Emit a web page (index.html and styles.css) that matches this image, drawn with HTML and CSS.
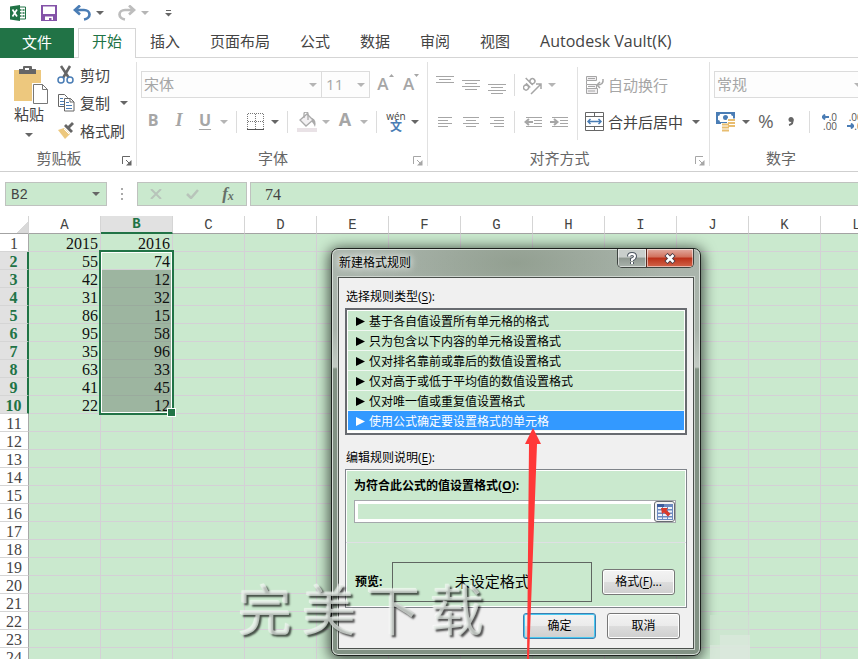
FILE: index.html
```html
<!DOCTYPE html>
<html lang="zh-CN">
<head>
<meta charset="utf-8">
<title>Excel</title>
<link rel="stylesheet" href="styles.css">
</head>
<body>
<svg class="defs" aria-hidden="true">
  <symbol id="launcher" viewBox="0 0 10 10"><path d="M.5 8V.5H8M4 4l3 3" fill="none" stroke="currentColor"/><path d="M9.500 4v5.500H4z" fill="currentColor"/></symbol>
</svg>

<header class="quick">
  <svg class="logo" width="16" height="16" viewBox="0 0 16 16"><path d="M9 2h6.500v12H9" fill="#fff" stroke="#217346"/><path d="M10 5h1.500m1 0h2M10 8h1.500m1 0h2M10 11h1.500m1 0h2" stroke="#217346" stroke-width="1.500"/><path d="M0 1.500 10 0v16L0 14.500z" fill="#217346"/><path d="m2.500 4.500 4.500 7m0-7-4.500 7" stroke="#fff" stroke-width="1.700"/></svg>
  <button class="plain save" aria-label="保存"><svg width="16" height="16" viewBox="0 0 16 16"><path d="M0 0h16v16H0z" fill="#8453a8"/><path d="M2 1.500h12V9H2zM4 11.500h8V15h-1.500v-2H8v2H4z" fill="#fff"/></svg></button>
  <button class="plain" aria-label="撤消"><svg width="18" height="16" viewBox="0 0 18 16"><path d="M2 5h9c3 0 5.500 2 5.500 4.500S14 14 11 14.500" fill="none" stroke="#4a7db5" stroke-width="2.700"/><path d="M7 .5 2 5l5 4.500" fill="none" stroke="#4a7db5" stroke-width="2.700"/></svg></button>
  <button class="plain caret" aria-label="撤消列表"></button>
  <button class="plain off redo" aria-label="恢复"><svg width="18" height="16" viewBox="0 0 18 16"><path d="M16 5H7C4 5 1.500 7 1.500 9.500S4 14 7 14.500M11 .5 16 5l-5 4.500" fill="none" stroke="#bdbdbd" stroke-width="2.700"/></svg></button>
  <button class="plain caret off" aria-label="恢复列表"></button>
  <button class="plain customize" aria-label="自定义"><svg width="7" height="7" viewBox="0 0 7 7"><path d="M1 .5h5" stroke="#666"/><path d="M0 3h7L3.500 6.500z" fill="#666"/></svg></button>
</header>

<nav class="tabs">
  <a class="file" href="#">文件</a>
  <a class="active" href="#">开始</a>
  <a href="#">插入</a>
  <a href="#">页面布局</a>
  <a href="#">公式</a>
  <a href="#">数据</a>
  <a href="#">审阅</a>
  <a href="#">视图</a>
  <a class="latin" href="#">Autodesk Vault(K)</a>
</nav>

<section class="ribbon">
  <div class="group clipboard">
    <div class="body">
      <button class="plain paste"><svg width="36" height="40" viewBox="0 0 36 40"><path d="M0 4h27v31H0z" fill="#edc87e"/><path d="M5 8V3h4V1q0-1 1-1h7q1 0 1 1v2h4v5z" fill="#666"/><path d="M11 2h4v2h-4z" fill="#fff"/><path d="M18 17h11l6 6v15H18z" fill="#fff"/><path d="M19.500 18.500h9l5 5v14h-14zM28.500 18.500v5h5" fill="#fff" stroke="#777"/></svg><span>粘贴</span><i class="caret"></i></button>
      <div class="stack">
        <button class="plain"><svg width="18" height="20" viewBox="0 0 18 20"><path d="m4 1 8 12M13 1 6 13" stroke="#666" stroke-width="2.500"/><circle cx="4" cy="15" r="3" fill="#fff" stroke="#4a7db5" stroke-width="1.500"/><circle cx="13" cy="15" r="3" fill="#fff" stroke="#4a7db5" stroke-width="1.500"/></svg>剪切</button>
        <button class="plain"><svg width="18" height="20" viewBox="0 0 18 20"><path d="M1.500 1.500h6l3 3v9h-9z" fill="#fff" stroke="#666"/><path d="M3 5.500h3m-3 3h4m-4 3h4" stroke="#4a7db5"/><path d="M7.500 5.500h6l3.500 3.500v9H7.500z" fill="#fff" stroke="#666"/><path d="M13 5.500V9h4" fill="none" stroke="#666"/><path d="M9 9.500h3m-3 3h6m-6 3h6" stroke="#4a7db5"/></svg>复制<i class="caret"></i></button>
        <button class="plain"><svg width="18" height="20" viewBox="0 0 18 20"><path d="m1 9 6-2 6 6-5 5z" fill="#edc87e"/><path d="m7 5 7 7 2-2-3-3 4-4-2-2-4 4-2-2z" fill="#666"/><path d="m7 8 5 5" stroke="#fff"/></svg>格式刷</button>
      </div>
    </div>
    <footer><span>剪贴板</span><button class="plain" aria-label="剪贴板选项"><svg width="10" height="10"><use href="#launcher"/></svg></button></footer>
  </div>

  <div class="group font">
    <div class="body rows">
      <div class="line">
        <div class="combo face"><select aria-label="字体"><option>宋体</option></select></div>
        <div class="combo size"><select aria-label="字号"><option>11</option></select></div>
        <button class="tool off letter" aria-label="增大字号">A<svg width="5" height="3"><path d="M0 3 2.500 0 5 3z" fill="currentColor"/></svg></button>
        <button class="tool off letter" aria-label="减小字号">A<svg width="5" height="3"><path d="M0 0h5L2.500 3z" fill="currentColor"/></svg></button>
      </div>
      <div class="line">
        <button class="tool off bold">B</button>
        <button class="tool off italic">I</button>
        <button class="tool off under">U</button><button class="plain caret off" aria-label="下划线选项"></button>
        <hr>
        <button class="tool" aria-label="边框"><svg width="18" height="18" viewBox="0 0 18 18"><path d="M.5 1v15M8.500 1v15M16.500 1v15M1 .5h16M1 8.500h16" stroke="#777" stroke-dasharray="1 1"/><path d="M0 16.500h17" stroke="#555"/></svg></button><button class="plain caret" aria-label="边框选项"></button>
        <hr>
        <button class="tool off" aria-label="填充颜色"><svg width="20" height="20" viewBox="0 0 20 20"><path d="m3 8 7-6 6 6-7 6z" fill="#f2f0f2" stroke="#aaa" stroke-width="1.300"/><path d="M7 6V2q0-2 2-2t2 2v6" fill="none" stroke="#aaa" stroke-width="1.300"/><path d="M15 6q5 2 3 9-1-3-3-5z" fill="#aaa"/><path d="M0 16h20v4H0z" fill="#e9e2e6"/></svg></button><button class="plain caret off" aria-label="填充选项"></button>
        <button class="tool off fontcolor" aria-label="字体颜色">A</button><button class="plain caret off" aria-label="字体颜色选项"></button>
        <hr>
        <button class="tool phonetic"><small>wén</small><b>文</b></button><button class="plain caret" aria-label="拼音选项"></button>
      </div>
    </div>
    <footer><span>字体</span><button class="plain off" aria-label="字体选项"><svg width="10" height="10"><use href="#launcher"/></svg></button></footer>
  </div>

  <div class="group align">
    <div class="body">
      <div class="rows">
        <div class="line">
          <button class="tool off" aria-label="顶端对齐"><svg width="18" height="20"><path d="M0 1.500h18M3 4.500h12M0 7.500h18" stroke="currentColor"/></svg></button>
          <button class="tool off" aria-label="垂直居中"><svg width="18" height="20"><path d="M0 5.500h18M3 8.500h12M0 11.500h18M3 14.500h12" stroke="currentColor"/></svg></button>
          <button class="tool off" aria-label="底端对齐"><svg width="18" height="20"><path d="M0 9.500h18M3 12.500h12M0 15.500h18M3 18.500h12" stroke="currentColor"/></svg></button>
          <hr>
          <button class="tool off" aria-label="方向"><svg width="20" height="20" viewBox="0 0 20 20"><g transform="rotate(-45 8 9)" fill="none" stroke="currentColor" stroke-width="1.500"><circle cx="2" cy="8" r="2.500"/><path d="M5 5v6M8.500 1v10"/><circle cx="11" cy="8" r="2.500"/></g><path d="m8 19 10-10m-5 0h5v5" fill="none" stroke="currentColor" stroke-width="1.500"/></svg></button><button class="plain caret off" aria-label="方向选项"></button>
        </div>
        <div class="line">
          <button class="tool off" aria-label="左对齐"><svg width="14" height="12"><path d="M0 1.500h14M0 4.500h10M0 7.500h14M0 10.500h10" stroke="currentColor"/></svg></button>
          <button class="tool off" aria-label="居中"><svg width="16" height="12"><path d="M0 1.500h16M3 4.500h10M0 7.500h16M3 10.500h10" stroke="currentColor"/></svg></button>
          <button class="tool off" aria-label="右对齐"><svg width="14" height="12"><path d="M0 1.500h14M4 4.500h10M0 7.500h14M4 10.500h10" stroke="currentColor"/></svg></button>
          <hr>
          <button class="tool off" aria-label="减少缩进"><svg width="18" height="12"><path d="M2 1.500h16M10 4.500h8M10 7.500h8M2 10.500h16" stroke="currentColor"/><path d="M1 6h8M5 3 1.500 6 5 9" fill="none" stroke="currentColor" stroke-width="2"/></svg></button>
          <button class="tool off" aria-label="增加缩进"><svg width="18" height="12"><path d="M2 1.500h16M10 4.500h8M10 7.500h8M2 10.500h16" stroke="currentColor"/><path d="M0 6h8M4 3l3.500 3L4 9" fill="none" stroke="currentColor" stroke-width="2"/></svg></button>
        </div>
      </div>
      <div class="rows wide">
        <div class="line"><button class="plain off"><svg width="20" height="20" viewBox="0 0 20 20"><path d="M1.500 1.500h10v4h-10zM1.500 9.500h10v4M1.500 9.500v9h11v-5h-11M1.500 5.500v4" fill="#f0eef0" stroke="currentColor"/><path d="M3 3.500h7M3 11.500h7M3 16h7" stroke="currentColor"/><path d="M18 4q1 6-6 6m3-3-3 3 3 3" fill="none" stroke="currentColor" stroke-width="1.500"/></svg>自动换行</button></div>
        <div class="line"><button class="plain"><svg width="20" height="20" viewBox="0 0 20 20"><path d="M.5.5h18v18H.5zM.5 4.500h18M.5 14.500h18M9.500.5v4M9.500 14.500v4" fill="none" stroke="#666"/><path d="M3 9.500h13M5.500 7 3 9.500 5.500 12m8-5L16 9.500 13.500 12" fill="none" stroke="#4a7db5" stroke-width="1.500"/></svg>合并后居中<i class="caret"></i></button></div>
      </div>
    </div>
    <footer><span>对齐方式</span><button class="plain off" aria-label="对齐选项"><svg width="10" height="10"><use href="#launcher"/></svg></button></footer>
  </div>

  <div class="group number">
    <div class="body rows">
      <div class="line"><div class="combo format"><select aria-label="数字格式"><option>常规</option></select></div></div>
      <div class="line">
        <button class="tool" aria-label="会计数字格式"><svg width="20" height="20" viewBox="0 0 20 20"><path d="M0 0h19v12H0z" fill="#4a7db5"/><path d="M2 4q2 0 2-2h11q0 2 2 2v4q-2 0-2 2H4q0-2-2-2z" fill="#fff"/><circle cx="9.500" cy="5.500" r="2.500" fill="#4a7db5"/><path d="M11 6.500h9V16h-6v4H5v-9h6z" fill="#fff"/><path d="M12 8h7m-7 3h7m-7 3h7M6 12.500h7m-7 3h7m-7 3h7" stroke="#e8bd70" stroke-width="2"/></svg></button><button class="plain caret" aria-label="货币选项"></button>
        <button class="tool percent">%</button>
        <button class="tool" aria-label="千位分隔样式"><svg width="8" height="12" viewBox="0 0 8 12"><circle cx="4" cy="3.500" r="2.500" fill="#666"/><path d="M5.500 3q1 5-3.500 6" stroke="#666" stroke-width="2" fill="none"/></svg></button>
        <hr>
        <button class="tool decimal" aria-label="增加小数位数"><span><svg width="7" height="6"><path d="M0 3h7M3 .5.500 3 3 5.500" fill="none" stroke="#4a7db5" stroke-width="2"/></svg>.0</span><span>.00</span></button>
        <button class="tool decimal" aria-label="减少小数位数"><span>.00</span><span><svg width="7" height="6"><path d="M0 3h7M4 .5 6.500 3 4 5.500" fill="none" stroke="#4a7db5" stroke-width="2"/></svg>.0</span></button>
      </div>
    </div>
    <footer><span>数字</span></footer>
  </div>
</section>

<section class="formulabar">
  <div class="namebox"><input aria-label="名称框" value="B2"><i class="caret"></i></div>
  <svg class="grip" width="2" height="12"><path d="M0 1h2M0 6h2M0 11h2" stroke="#aaa" stroke-width="2"/></svg>
  <div class="entry">
    <button class="plain" aria-label="取消输入"><svg width="12" height="10" viewBox="0 0 12 10"><path d="m1 0 10 10M11 0 1 10" stroke="#b8c4ba" stroke-width="2"/></svg></button>
    <button class="plain" aria-label="输入"><svg width="13" height="10" viewBox="0 0 13 10"><path d="m1 5 4 4 7-8" fill="none" stroke="#b8c4ba" stroke-width="2.500"/></svg></button>
    <button class="plain fx" aria-label="插入函数">f<small>x</small></button>
  </div>
  <input class="formula" aria-label="编辑栏" value="74">
</section>

<main class="sheet">
  <table id="grid"></table>
  <div class="selection"></div>
</main>

<section class="dialog" role="dialog" aria-labelledby="dialog-title">
  <header>
    <h1 id="dialog-title">新建格式规则</h1>
    <div class="winbuttons">
      <button class="help" aria-label="帮助"><svg width="10" height="13" viewBox="0 0 10 13"><path d="M2 4.500Q2 2 5 2t3 2.500Q8 6 5 7.500V9M5 10v2" fill="none" stroke="#4c5560" stroke-width="4"/><path d="M2 4.500Q2 2 5 2t3 2.500Q8 6 5 7.500V9M5 10v2" fill="none" stroke="#fff" stroke-width="2"/></svg></button>
      <button class="close" aria-label="关闭"><svg width="12" height="11" viewBox="0 0 12 11"><path d="m2 1.500 8 8m0-8-8 8" stroke="#4b3a44" stroke-width="4.500"/><path d="m2.500 2 7 7m0-7-7 7" stroke="#fff" stroke-width="2.500"/></svg></button>
    </div>
  </header>
  <form class="content">
    <p class="caption" id="type-label">选择规则类型(<u>S</u>):</p>
    <div class="rules" role="radiogroup" aria-labelledby="type-label">
      <label><input type="radio" name="rule">基于各自值设置所有单元格的格式</label>
      <label><input type="radio" name="rule">只为包含以下内容的单元格设置格式</label>
      <label><input type="radio" name="rule">仅对排名靠前或靠后的数值设置格式</label>
      <label><input type="radio" name="rule">仅对高于或低于平均值的数值设置格式</label>
      <label><input type="radio" name="rule">仅对唯一值或重复值设置格式</label>
      <label><input type="radio" name="rule" checked>使用公式确定要设置格式的单元格</label>
    </div>
    <p class="caption">编辑规则说明(<u>E</u>):</p>
    <div class="editor">
      <div class="condition">
        <label for="rule-formula">为符合此公式的值设置格式(<u>O</u>):</label>
        <div class="picker">
          <input id="rule-formula">
          <button type="button" aria-label="选择区域"><svg width="16" height="16" viewBox="0 0 16 16"><path d="M0 0h16v16H0z" fill="#6d8bc0"/><path d="M0 0h7v3H0z" fill="#3d5c9c"/><path d="M1 3h4v2H1zm5 0h4v2H6zm5 0h4v2h-4zM1 6.500h4v2H1zm5 0h4v2H6zm5 0h4v2h-4zM1 10h4v2H1zm5 0h4v2H6zm5 0h4v2h-4zM1 13.500h4V15H1zm5 0h4V15H6zm5 0h4V15h-4z" fill="#edf2fa"/><path d="M4 4h7L9.500 6l4 4-2.500 2.500-4-4L5 10z" fill="#d93a2b"/></svg></button>
        </div>
      </div>
      <div class="preview">
        <span>预览:</span>
        <output>未设定格式</output>
        <button type="button" class="push">格式(<u>F</u>)...</button>
      </div>
    </div>
    <div class="actions">
      <button type="button" class="push default">确定</button>
      <button type="button" class="push">取消</button>
    </div>
  </form>
</section>

<svg class="haze" width="60" height="44" viewBox="0 0 60 44" aria-hidden="true"><path d="M0 0h40v44H0z" fill="#d0e3d2" opacity=".5"/><path d="M10 20h30v24H10z" fill="#dce8dd" opacity=".7"/><path d="M0 30h40v14H0z" fill="#dce8dd" opacity=".6"/></svg>
<div class="watermark"><span>完</span><span>美</span><span>下</span><span>载</span></div>
<svg class="arrow" width="18" height="232" viewBox="0 0 18 232" aria-hidden="true"><path d="M8 0 16 16h-4L4 232H2L4 16H0z" fill="#ff3838"/></svg>
<script src="grid.js"></script>
</body>
</html>
```
FILE: styles.css
```css
:root {
  --green: #217346;
  --cell: #cae9ce;
  --line: #d4d0d6;
  --rule: #d5d5d5;
  --text: #444;
  --off: #a6a6a6;
}

* { box-sizing: border-box; }

body {
  margin: 0;
  height: 100vh;
  overflow: hidden;
  display: flex;
  flex-direction: column;
  background: #fff;
  color: var(--text);
  font: 15px/20px "Open Sans", "Noto Sans CJK SC", sans-serif;
}

button, input, select { font: inherit; color: inherit; }
svg { display: block; flex: none; }
.defs { position: absolute; width: 0; height: 0; }

.plain, .tool {
  display: flex;
  align-items: center;
  justify-content: center;
  padding: 0;
  border: 0;
  background: none;
  white-space: nowrap;
}
.tool { width: 26px; height: 26px; }
.off { color: var(--off); }

.caret {
  display: flex;
  align-items: center;
  justify-content: center;
  flex: none;
  width: 12px;
  color: #666;
}
.caret::before {
  content: "";
  border: 4px solid transparent;
  border-top-color: currentColor;
  border-bottom: 0;
}
.caret.off { color: #b5b5b5; }

/* Quick access toolbar */
.quick {
  display: flex;
  align-items: center;
  flex: none;
  height: 28px;
  padding: 0 10px 2px;
}
.save { margin: 0 16px 0 15px; }
.quick > .caret { margin-left: 3px; }
.redo { margin-left: 12px; }
.customize { margin-left: 14px; }

/* Ribbon tabs */
.tabs {
  display: flex;
  flex: none;
  height: 30px;
  border-bottom: 1px solid var(--rule);
}
.tabs a {
  padding: 3px 15px;
  color: var(--text);
  text-decoration: none;
  white-space: nowrap;
}
.tabs .latin { font-size: 16px; }
.tabs .file {
  width: 74px;
  height: 30px;
  margin-right: 4px;
  padding-top: 4px;
  background: var(--green);
  color: #fff;
  text-align: center;
}
.tabs .active {
  height: 30px;
  padding: 2px 13px;
  border: 1px solid var(--rule);
  border-bottom: 0;
  background: #fff;
  color: var(--green);
}
.tabs .active + a { padding-left: 14px; }

/* Ribbon */
.ribbon {
  display: flex;
  flex: none;
  height: 114px;
  padding: 4px 0 5px;
  border-bottom: 1px solid #cfcfcf;
}
.group {
  display: flex;
  flex-direction: column;
  flex: none;
  border-right: 1px solid #e1e1e1;
}
.group .body { display: flex; flex: 1; }
.group footer {
  display: flex;
  align-items: flex-end;
  height: 18px;
  padding-right: 4px;
  color: #666;
}
.group footer span { flex: 1; height: 18px; padding-right: 4px; text-align: center; }
.clipboard { width: 137px; }
.font { width: 291px; }
.align { width: 282px; }
.number { width: 160px; border: 0; }
.number footer { padding-right: 14px; }

.group .rows { display: flex; flex-direction: column; gap: 10px; padding: 9px 3px 0; }
.line { display: flex; align-items: center; height: 27px; }
.line hr { width: 1px; height: 22px; margin: 0 6px; border: 0; background: #dcdcdc; }

.paste { flex-direction: column; justify-content: flex-start; width: 56px; padding: 4px 0 0 8px; }
.paste span { line-height: 20px; margin: -2px 6px 9px 0; }
.paste .caret { margin-right: 6px; }
.stack { display: flex; flex-direction: column; padding-left: 1px; }
.stack button { justify-content: flex-start; gap: 5px; height: 28px; padding-bottom: 2px; }
.stack .caret { margin-left: 3px; }

.combo { position: relative; height: 27px; border: 1px solid #dcdcdc; background: #fdfdfd; }
.combo select {
  display: block;
  width: 100%;
  height: 25px;
  padding: 0 2px 2px;
  border: 0;
  appearance: none;
  background: none;
  color: var(--off);
}
.combo::after {
  content: "";
  position: absolute;
  top: 11px;
  right: 4px;
  border: 4px solid transparent;
  border-top-color: #b5b5b5;
  border-bottom: 0;
}
.font .line:first-child { margin-left: 1px; }
.face { width: 183px; }
.size { width: 48px; border-left: 0; }
.size select { padding-left: 4px; }
.format { flex: 1; }

.letter { align-items: flex-start; padding: 2px 0 0; font-size: 17px; font-weight: 600; }
.size + .letter { margin-left: 3px; }
.bold, .under { padding-bottom: 3px; font-size: 16px; font-weight: 700; }
.italic { padding-bottom: 2px; font: italic bold 18px "Liberation Serif", serif; }
.under { text-decoration: underline; text-underline-offset: 3px; }
.fontcolor { font-size: 18px; font-weight: 700; padding-bottom: 5px; }
.phonetic { flex-direction: column; }
.phonetic small { font-size: 10px; line-height: 8px; }
.phonetic b { font: 700 12px/12px "Noto Sans CJK SC", sans-serif; color: #4a7db5; }

.align .body > .rows { padding-left: 4px; }
.align hr { margin: 0 5px 0 4px; }
.align .body > .wide { margin: 5px 0 8px 2px; padding: 4px 0 0 7px; border-left: 1px solid #e1e1e1; }
.wide button { gap: 3px; }
.wide .caret { margin-left: 4px; }

.number .line { padding-left: 1px; }
.percent { margin-left: 1px; padding-bottom: 2px; font-size: 19px; color: #666; }
.number .caret { width: 14px; }
.decimal { flex-direction: column; margin-right: 1px; font-size: 10px; line-height: 9px; color: #555; }
.decimal span { display: flex; align-items: center; justify-content: flex-end; width: 18px; }

/* Formula bar */
.formulabar {
  display: flex;
  align-items: center;
  flex: none;
  height: 44px;
  padding-left: 5px;
}
.namebox, .entry, .formula {
  display: flex;
  height: 24px;
  border: 1px solid #bfc2bf;
  background: var(--cell);
}
.namebox { width: 102px; padding-right: 4px; }
.namebox input {
  flex: 1;
  min-width: 0;
  padding: 2px 5px 0;
  border: 0;
  background: none;
  font: 14px "Liberation Mono", monospace;
}
.grip { margin: 0 14px; }
.entry { width: 110px; }
.entry button { flex: 1; }
.fx { font: italic bold 17px "Liberation Serif", serif; color: #667068; }
.fx small { font-size: 12px; padding-top: 4px; }
.formula {
  flex: 1;
  min-width: 0;
  margin-left: 3px;
  padding: 2px 14px 0;
  border-right: 0;
  font: 16px "Liberation Serif", serif;
}

/* Worksheet */
.sheet { position: relative; flex: 1; min-height: 0; overflow: hidden; }
#grid {
  width: 893px;
  table-layout: fixed;
  border-collapse: separate;
  border-spacing: 0;
  font: 16px/15px "Liberation Serif", serif;
  color: #111;
}
#grid th, #grid td { height: 18px; padding: 2px 0 0; }
#grid th { background: #fff; color: var(--text); font-weight: 400; text-align: center; }
#grid th:first-child { width: 29px; border-right: 1px solid #a8a8a8; border-bottom: 1px solid var(--rule); }
#grid thead th {
  padding-top: 1px;
  border-right: 1px solid var(--rule);
  border-bottom: 1px solid #a3a3a3;
  font-family: "Liberation Mono", monospace;
  font-size: 14px;
}
#grid thead th:first-child {
  border-color: var(--rule) var(--rule) #a3a3a3;
  background: linear-gradient(135deg, #fff 75%, #d9d9d9 75%);
}
#grid td {
  padding-right: 2px;
  border-right: 1px solid var(--line);
  border-bottom: 1px solid var(--line);
  background: var(--cell);
  text-align: right;
}
#grid th.on { background: #e1e1e1; color: var(--green); font-weight: 700; }
#grid thead th.on { border-bottom: 2px solid var(--green); }
#grid tbody th.on { border-right: 2px solid var(--green); }
#grid td.shade { background: #9db5a0; border-bottom-color: #9aaa9d; }

/* Marquee round B2:B10 */
.selection {
  position: absolute;
  left: 99px;
  top: 34px;
  width: 75px;
  height: 165px;
  border: 2px solid var(--green);
  box-shadow: inset 0 0 0 1px #fff;
}
.selection::after {
  content: "";
  position: absolute;
  right: -4px;
  bottom: -4px;
  width: 7px;
  height: 7px;
  border: 1px solid #fff;
  background: var(--green);
}

/* Dialog window */
.dialog {
  position: absolute;
  left: 331px;
  top: 248px;
  width: 370px;
  padding: 0 6px 6px;
  border: 1px solid #1c211d;
  border-radius: 7px;
  background:
    radial-gradient(ellipse 150px 60px at 50% 14px, #83917f99, transparent),
    linear-gradient(#aab5ac, #a9b4ab 80px, #c2cac3 118px, #829284 120px, #829284);
  box-shadow: inset 0 0 0 1px #d8dfd9, 0 2px 14px 2px #000a;
  color: #000;
  font: 12px/16px "Open Sans", "Noto Sans CJK SC", sans-serif;
}
.dialog header { display: flex; justify-content: space-between; height: 28px; }
.dialog h1 {
  margin: 6px 0 0 1px;
  font-size: 12px;
  font-weight: 400;
  line-height: 16px;
  text-shadow: 0 0 6px #fff, 0 0 10px #fff;
}
.winbuttons {
  display: flex;
  height: 19px;
  border: 1px solid #3e4440;
  border-top: 0;
  border-radius: 0 0 5px 5px;
  overflow: hidden;
}
.winbuttons button { display: grid; place-items: center; padding: 0; border: 0; box-shadow: inset 0 0 0 1px #fff8; }
.help { width: 28px; background: linear-gradient(#c9cecb 45%, #8f9891 50%, #a9b2ab); }
.winbuttons .close { width: 47px; border-left: 1px solid #5a2a20; background: linear-gradient(#e2aca0, #d1705b 45%, #bb3018 50%, #d2654a); }

.content {
  padding: 11px 6px 9px;
  border: 1px solid #4b504c;
  background: #f0f0f0;
  box-shadow: 0 0 0 1px #cdd4ce;
}
.caption { margin: 0 0 3px 1px; }
.dialog u { text-underline-offset: 2px; }
.rules {
  padding: 1px 1px 2px;
  border: 2px solid #686b70;
  background: #fff;
}
.rules label {
  display: flex;
  align-items: center;
  height: 20px;
  padding: 2px 0 0 8px;
  border-bottom: 1px solid #f1f8f2;
  background: var(--cell);
}
.rules input {
  appearance: none;
  width: 9px;
  height: 9px;
  margin: 0 4px 0 0;
  background: currentColor;
  clip-path: polygon(0 0, 100% 50%, 0 100%);
}
.rules label:has(:checked) { background: #39f; color: #fff; }
.rules + .caption { margin-top: 15px; }

.editor {
  border: 1px solid #7f848a;
  background: var(--cell);
  box-shadow: inset 0 0 0 1px #fff;
}
.condition { padding: 8px 10px 19px 8px; border-bottom: 1px solid #dfe0e4; }
.condition label, .preview span { font-weight: 700; }
.picker {
  display: flex;
  height: 23px;
  margin-top: 6px;
  border: 1px solid #a5a8ac;
  background: #fff;
}
.picker input {
  flex: 1;
  min-width: 0;
  margin: 3px;
  padding: 0 2px;
  border: 0;
  background: var(--cell);
}
.picker button {
  display: grid;
  place-items: center;
  width: 21px;
  padding: 0;
  border: 1px solid #666a70;
  border-radius: 3px;
  background: #f3f3f3;
}
.preview { display: flex; align-items: center; padding: 19px 11px 5px 9px; }
.preview output {
  flex: 1;
  height: 40px;
  margin: 0 10px;
  border: 1px solid #5f6661;
  font-size: 15px;
  line-height: 36px;
  text-align: center;
}
.push {
  width: 73px;
  height: 26px;
  padding: 0;
  border: 1px solid #777;
  border-radius: 3px;
  background: linear-gradient(#f3f3f3, #ebebeb 49%, #dddddd 50%, #cfcfcf);
  box-shadow: inset 0 0 0 1px #fff;
}
.default { border-color: #3c7fb1; box-shadow: inset 0 0 0 1px #48c8f0; }
.actions { display: flex; justify-content: flex-end; gap: 11px; padding: 5px 7px 0 0; }

/* Overlays */
.haze { position: absolute; right: 88px; bottom: 0; }
.watermark {
  position: absolute;
  left: 238px;
  top: 578px;
  display: flex;
  gap: 10px;
  color: #e4ebe5b0;
  font: 54px/60px "Noto Sans CJK SC", sans-serif;
  text-shadow: 2px 2px 2px #000a, -1px -1px 1px #fff9;
  pointer-events: none;
}
.arrow { position: absolute; left: 525px; top: 428px; pointer-events: none; }
```
FILE: grid.js
```js
const columns = "ABCDEFGHIJKL".split("");
const values = [
  [2015, 2016], [55, 74], [42, 12], [31, 32], [86, 15],
  [95, 58], [35, 96], [63, 33], [41, 45], [22, 12]
];
const rowCount = 24;
const selected = row => row >= 2 && row <= 10;

const head = columns
  .map(name => `<th scope="col"${name === "B" ? ' class="on"' : ""}>${name}</th>`)
  .join("");

let body = "";
for (let row = 1; row <= rowCount; row++) {
  const cells = columns.map((name, i) => {
    const value = (values[row - 1] || [])[i] ?? "";
    const shade = name === "B" && selected(row) && row > 2 ? ' class="shade"' : "";
    return `<td${shade}>${value}</td>`;
  }).join("");
  body += `<tr><th scope="row"${selected(row) ? ' class="on"' : ""}>${row}</th>${cells}</tr>`;
}

document.getElementById("grid").innerHTML =
  `<thead><tr><th></th>${head}</tr></thead><tbody>${body}</tbody>`;
```
